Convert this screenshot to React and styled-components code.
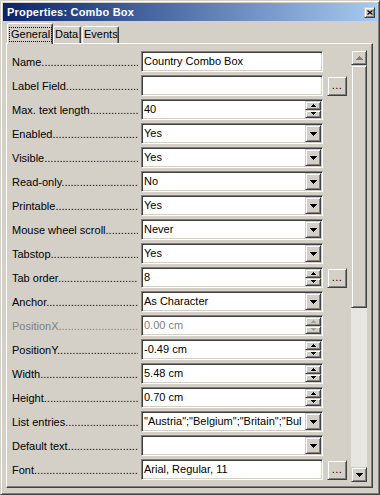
import React from 'react';
import styled, { createGlobalStyle } from 'styled-components';

const GlobalStyle = createGlobalStyle`
  html, body {
    margin: 0;
    padding: 0;
    background: #d4d0c8;
  }
  body {
    font-family: "Liberation Sans", Arial, sans-serif;
    font-size: 11px;
    color: #000;
  }
  * {
    box-sizing: border-box;
  }
`;

const Window = styled.div`
  width: 380px;
  height: 495px;
  background: #d4d0c8;
  border: 1px solid;
  border-color: #d4d0c8 #404040 #404040 #d4d0c8;
  box-shadow: inset 1px 1px #fff, inset -1px -1px #808080;
  padding: 2px;
  display: flex;
  flex-direction: column;
`;

const TitleBar = styled.div`
  height: 18px;
  flex: none;
  display: flex;
  align-items: center;
  justify-content: space-between;
  padding: 0 2px 0 4px;
  background: linear-gradient(to right, #0a246a, #a6caf0);
`;

const Title = styled.span`
  color: #fff;
  font-weight: bold;
  font-size: 11px;
  letter-spacing: 0.2px;
  white-space: nowrap;
`;

const Raised = `
  background: #d4d0c8;
  border: 1px solid;
  border-color: #d4d0c8 #404040 #404040 #d4d0c8;
  box-shadow: inset 1px 1px #fff, inset -1px -1px #808080;
`;

const CloseButton = styled.div`
  ${Raised}
  width: 11px;
  height: 11px;
  display: flex;
  align-items: center;
  justify-content: center;
`;

const TabRow = styled.div`
  height: 22px;
  flex: none;
  display: flex;
  align-items: flex-end;
  padding-left: 4px;
`;

const Tab = styled.div`
  position: relative;
  z-index: ${p => (p.$active ? 2 : 1)};
  width: ${p => p.$w}px;
  height: ${p => (p.$active ? 21 : 17)}px;
  margin-bottom: ${p => (p.$active ? -1 : 0)}px;
  margin-right: ${p => p.$gap || 0}px;
  padding: ${p => (p.$active ? '3px 0 0 1px' : '1px 0 0 1px')};
  background: #d4d0c8;
  border: 1px solid;
  border-bottom: none;
  border-color: #fff #404040 transparent #fff;
  border-radius: 2px 2px 0 0;
  box-shadow: inset -1px 0 #808080;
  line-height: 13px;
  white-space: nowrap;
`;

const FocusLabel = styled.span`
  display: inline-block;
  height: 15px;
  padding: 0 1px;
  line-height: 13px;
  border: 1px dotted #000;
`;

const Panel = styled.div`
  flex: 1;
  margin: 0 4px 4px 3px;
  border: 1px solid;
  border-color: #fff #404040 #404040 #fff;
  box-shadow: inset -1px -1px #808080;
  padding: 7px 5px 0 5px;
  display: flex;
`;

const Rows = styled.div`
  display: flex;
  flex-direction: column;
  gap: 3px;
`;

const Row = styled.div`
  display: flex;
  align-items: center;
  height: 21px;
`;

const Label = styled.div`
  width: 126px;
  margin-right: 3px;
  overflow: hidden;
  white-space: nowrap;
  color: ${p => (p.$disabled ? '#808080' : '#000')};
`;

const Field = styled.div`
  width: 182px;
  height: 21px;
  background: #fff;
  border: 1px solid;
  border-color: #808080 #fff #fff #808080;
  box-shadow: inset 1px 1px #404040, inset -1px -1px #d4d0c8;
  padding: 1px;
  display: flex;
`;

const FieldText = styled.div`
  flex: 1;
  min-width: 0;
  padding-left: 1px;
  line-height: 17px;
  overflow: hidden;
  white-space: nowrap;
  color: ${p => (p.$disabled ? '#808080' : '#000')};
`;

const DropButton = styled.div`
  ${Raised}
  width: 16px;
  height: 17px;
  flex: none;
  display: flex;
  align-items: center;
  justify-content: center;
`;

const Spin = styled.div`
  width: 16px;
  flex: none;
  display: flex;
  flex-direction: column;
`;

const SpinButton = styled.div`
  ${Raised}
  flex: 1;
  display: flex;
  align-items: center;
  justify-content: center;
`;

const DotsButton = styled.div`
  ${Raised}
  width: 20px;
  height: 20px;
  margin-left: 4px;
  display: flex;
  align-items: center;
  justify-content: center;
  padding-bottom: 2px;
  font-size: 11px;
  letter-spacing: 0.5px;
`;

const ScrollBar = styled.div`
  width: 16px;
  margin: -1px 0 5px auto;
  display: flex;
  flex-direction: column;
`;

const ScrollButton = styled.div`
  ${Raised}
  height: 15px;
  flex: none;
  display: flex;
  align-items: center;
  justify-content: center;
`;

const Thumb = styled.div`
  ${Raised}
  height: 243px;
  flex: none;
`;

const Track = styled.div`
  flex: 1;
  background: #e8e6e1;
`;

const ArrowDown = ({ color = '#000' }) => (
  <svg width="7" height="4" viewBox="0 0 7 4">
    <path d="M0 0h7v1h-1v1h-1v1h-1v1h-1v-1h-1v-1h-1v-1h-1z" fill={color} />
  </svg>
);

const SmallArrow = ({ up, color = '#000' }) => (
  <svg width="5" height="3" viewBox="0 0 5 3" style={{ transform: up ? 'scaleY(-1)' : 'none' }}>
    <path d="M0 0h5v1h-1v1h-1v1h-1v-1h-1v-1h-1z" fill={color} />
  </svg>
);

const ArrowUp = ({ color = '#000' }) => (
  <svg width="7" height="4" viewBox="0 0 7 4" style={{ transform: 'scaleY(-1)' }}>
    <path d="M0 0h7v1h-1v1h-1v1h-1v1h-1v-1h-1v-1h-1v-1h-1z" fill={color} />
  </svg>
);

const rows = [
  { label: 'Name', kind: 'text', value: 'Country Combo Box' },
  { label: 'Label Field', kind: 'text', value: '', more: true },
  { label: 'Max. text length', kind: 'spin', value: '40' },
  { label: 'Enabled', kind: 'drop', value: 'Yes' },
  { label: 'Visible', kind: 'drop', value: 'Yes' },
  { label: 'Read-only', kind: 'drop', value: 'No' },
  { label: 'Printable', kind: 'drop', value: 'Yes' },
  { label: 'Mouse wheel scroll', kind: 'drop', value: 'Never' },
  { label: 'Tabstop', kind: 'drop', value: 'Yes' },
  { label: 'Tab order', kind: 'spin', value: '8', more: true },
  { label: 'Anchor', kind: 'drop', value: 'As Character' },
  { label: 'PositionX', kind: 'spin', value: '0.00 cm', disabled: true },
  { label: 'PositionY', kind: 'spin', value: '-0.49 cm' },
  { label: 'Width', kind: 'spin', value: '5.48 cm' },
  { label: 'Height', kind: 'spin', value: '0.70 cm' },
  {
    label: 'List entries',
    kind: 'drop',
    value: '"Austria";"Belgium";"Britain";"Bul',
  },
  { label: 'Default text', kind: 'drop', value: '' },
  { label: 'Font', kind: 'text', value: 'Arial, Regular, 11', more: true },
];

const DOTS = '.'.repeat(60);

const PropertyRow = ({ label, kind, value, more, disabled }) => {
  const arrowColor = disabled ? '#a0a0a0' : '#000';
  return (
    <Row>
      <Label $disabled={disabled}>
        {label}
        {DOTS}
      </Label>
      <Field>
        <FieldText $disabled={disabled}>{value}</FieldText>
        {kind === 'drop' && (
          <DropButton>
            <ArrowDown />
          </DropButton>
        )}
        {kind === 'spin' && (
          <Spin>
            <SpinButton>
              <SmallArrow up color={arrowColor} />
            </SpinButton>
            <SpinButton>
              <SmallArrow color={arrowColor} />
            </SpinButton>
          </Spin>
        )}
      </Field>
      {more && <DotsButton>...</DotsButton>}
    </Row>
  );
};

export default function App() {
  return (
    <>
      <GlobalStyle />
      <Window>
        <TitleBar>
          <Title>Properties: Combo Box</Title>
          <CloseButton>
            <svg width="6" height="5" viewBox="0 0 6 5">
              <path d="M0.5 0.5l5 4M5.5 0.5l-5 4" stroke="#000" strokeWidth="1.2" />
            </svg>
          </CloseButton>
        </TitleBar>
        <TabRow>
          <Tab $active $w={46}>
            <FocusLabel>General</FocusLabel>
          </Tab>
          <Tab $w={28} $gap={1}>Data</Tab>
          <Tab $w={37}>Events</Tab>
        </TabRow>
        <Panel>
          <Rows>
            {rows.map(r => (
              <PropertyRow key={r.label} {...r} />
            ))}
          </Rows>
          <ScrollBar>
            <ScrollButton>
              <ArrowUp color="#808080" />
            </ScrollButton>
            <Thumb />
            <Track />
            <ScrollButton>
              <ArrowDown />
            </ScrollButton>
          </ScrollBar>
        </Panel>
      </Window>
    </>
  );
}
